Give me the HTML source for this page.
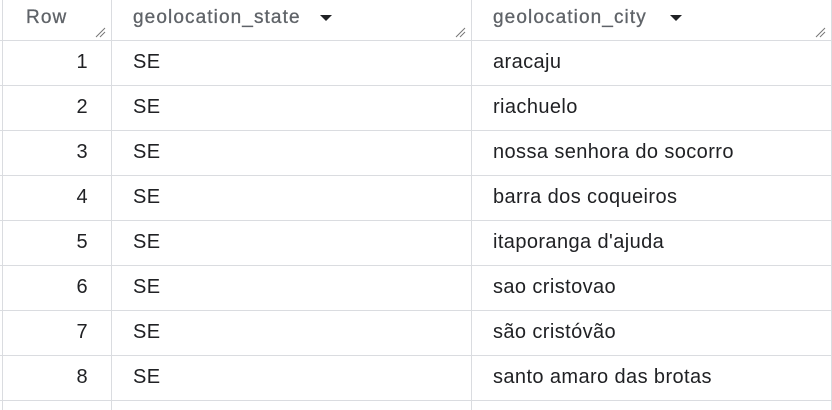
<!DOCTYPE html>
<html><head><style>
body{margin:0;width:832px;height:410px;overflow:hidden;background:#fff;font-family:"Liberation Sans",sans-serif;}
.v{position:absolute;top:0;bottom:0;width:1px;background:#dadce0;}
.h{position:absolute;left:0;right:0;height:1px;background:#dadce0;}
.t{position:absolute;font-size:20px;letter-spacing:0.4px;color:#202124;line-height:20px;}
.hd{position:absolute;font-size:19px;letter-spacing:1.1px;color:#5f6368;line-height:20px;top:8px;-webkit-text-stroke:0.3px #5f6368;}
.rs{position:absolute;top:26px;width:12px;height:12px;}
</style></head><body>
<div class="v" style="left:2px"></div>
<div class="v" style="left:111px"></div>
<div class="v" style="left:471px"></div>
<div class="v" style="left:831px"></div>
<div class="h" style="top:40px"></div>
<div class="h" style="top:85px"></div>
<div class="h" style="top:130px"></div>
<div class="h" style="top:175px"></div>
<div class="h" style="top:220px"></div>
<div class="h" style="top:265px"></div>
<div class="h" style="top:310px"></div>
<div class="h" style="top:355px"></div>
<div class="h" style="top:400px"></div>
<div class="hd" style="left:26px">Row</div>
<div class="hd" style="left:133px">geolocation_state</div>
<div class="hd" style="left:493px">geolocation_city</div>
<svg style="position:absolute;left:319px;top:14px" width="14" height="8" viewBox="0 0 14 8"><path d="M1 1H13L7 7Z" fill="#202124"/></svg>
<svg style="position:absolute;left:669px;top:14px" width="14" height="8" viewBox="0 0 14 8"><path d="M1 1H13L7 7Z" fill="#202124"/></svg>
<svg class="rs" style="left:94px" viewBox="0 0 12 12"><path d="M2 11L11 2M6 11L11 6" stroke="#777" stroke-width="1"/></svg>
<svg class="rs" style="left:454px" viewBox="0 0 12 12"><path d="M2 11L11 2M6 11L11 6" stroke="#777" stroke-width="1"/></svg>
<svg class="rs" style="left:814px" viewBox="0 0 12 12"><path d="M2 11L11 2M6 11L11 6" stroke="#777" stroke-width="1"/></svg>
<div id="rows"></div>
<script>
var c=["aracaju","riachuelo","nossa senhora do socorro","barra dos coqueiros","itaporanga d'ajuda","sao cristovao","são cristóvão","santo amaro das brotas"];
var h="";
for(var i=0;i<8;i++){var y=52+45*i;
h+='<div class="t" style="top:'+y+'px;left:40px;width:48px;text-align:right">'+(i+1)+'</div>';
h+='<div class="t" style="top:'+y+'px;left:133px">SE</div>';
h+='<div class="t" style="top:'+y+'px;left:493px">'+c[i]+'</div>';}
document.getElementById("rows").innerHTML=h;
</script>
</body></html>
